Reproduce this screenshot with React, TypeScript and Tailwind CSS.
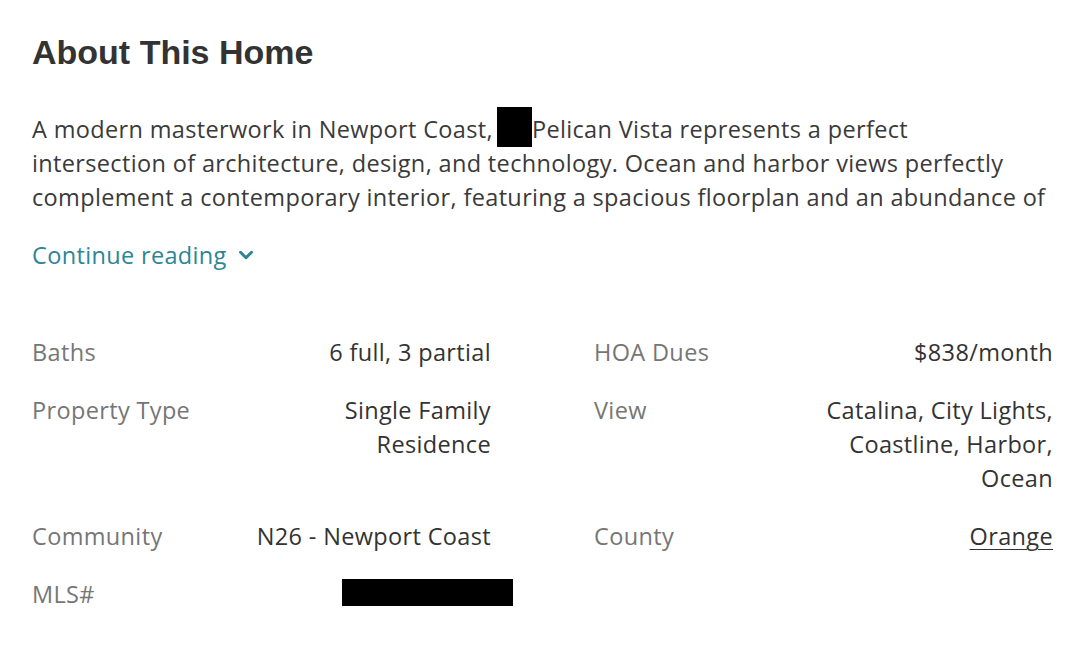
import { ChevronDown } from "lucide-react";

const facts: { label: string; value: string | null; link?: boolean }[] = [
  { label: "Baths", value: "6 full, 3 partial" },
  { label: "HOA Dues", value: "$838/month" },
  { label: "Property Type", value: "Single Family Residence" },
  { label: "View", value: "Catalina, City Lights, Coastline, Harbor, Ocean" },
  { label: "Community", value: "N26 - Newport Coast" },
  { label: "County", value: "Orange", link: true },
  { label: "MLS#", value: null },
];

function FactRow({ label, value, link }: { label: string; value: string | null; link?: boolean }) {
  return (
    <div className="flex justify-between items-start gap-4">
      <span className="text-[#767676]">{label}</span>
      {value ? (
        <span className={`text-right max-w-[250px] text-[#333] ${link ? "underline underline-offset-4 decoration-1" : ""}`}>
          {value}
        </span>
      ) : (
        <span className="block w-[171px] h-[27px] bg-black mt-[2px] mr-[-22px]" />
      )}
    </div>
  );
}

export default function App() {
  return (
    <main
      className="w-[1080px] h-[670px] bg-white pl-8 pr-[27px] pt-[30px] overflow-hidden tracking-[0.35px]"
      style={{ fontFamily: "'Open Sans', 'Noto Sans', sans-serif" }}
    >
      <h2 className="text-[34px] leading-[44px] font-bold text-[#333] tracking-normal" style={{ fontFamily: "'Liberation Sans', Arial, sans-serif" }}>
        About This Home
      </h2>
      <p className="mt-[33px] text-[23.5px] leading-[33.5px] text-[#3a3a3a] whitespace-nowrap">
        A modern masterwork in Newport Coast,
        <span className="inline-block w-[35px] h-[40px] bg-black align-[-9px] ml-[4px]" />
        Pelican Vista represents a perfect
        <br />
        intersection of architecture, design, and technology. Ocean and harbor views perfectly
        <br />
        complement a contemporary interior, featuring a spacious floorplan and an abundance of
      </p>
      <button className="mt-[24px] flex items-center gap-2 text-[23.5px] leading-[34px] text-[#2d8595]">
        Continue reading
        <ChevronDown size={22} strokeWidth={3.2} />
      </button>
      <div className="mt-[63px] grid grid-cols-2 gap-x-[103px] gap-y-6 text-[23.5px] leading-[34px]">
        {facts.map((f) => (
          <FactRow key={f.label} label={f.label} value={f.value} link={f.link} />
        ))}
      </div>
    </main>
  );
}
